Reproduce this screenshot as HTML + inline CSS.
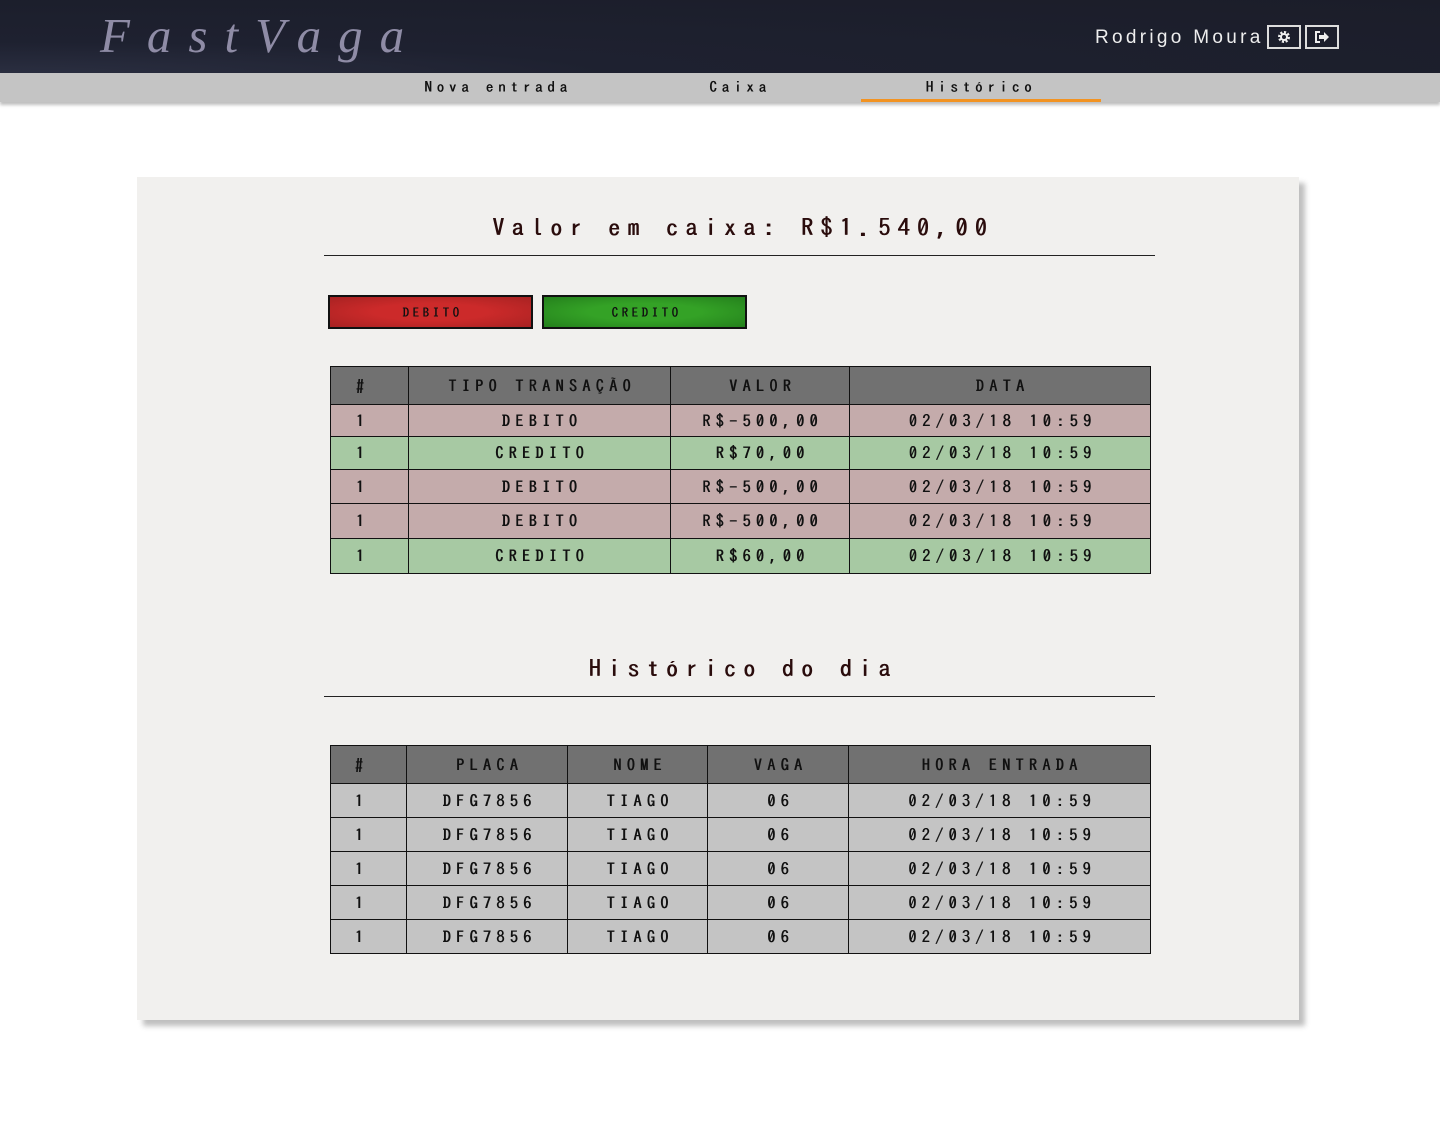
<!DOCTYPE html>
<html><head><meta charset="utf-8"><style>
*{margin:0;padding:0;box-sizing:border-box}
body{width:1440px;height:1138px;background:#fff;font-family:"IPAGothic","Liberation Mono",monospace;position:relative;overflow:hidden}
.hdr{position:absolute;left:0;top:0;width:1440px;height:73px;background:radial-gradient(ellipse at 0% 100%,#2a2e40 0%,#1e2130 30%,#1b1d29 100%);}
.logo{position:absolute;left:100px;top:7px;font-family:"Liberation Serif",serif;font-style:italic;font-size:49px;letter-spacing:17px;color:#8f8ca6}
.user{position:absolute;left:1095px;top:27px;font-family:"Liberation Sans",sans-serif;font-size:19px;letter-spacing:3.3px;color:#eee}
.ib{position:absolute;top:25px;width:34px;height:24px;border:2px solid #ddd;color:#eee;display:flex;align-items:center;justify-content:center}
.nav{position:absolute;left:0;top:73px;width:1440px;height:29px;background:#c4c4c4;box-shadow:0 3px 3px rgba(0,0,0,.25)}
.tab{position:absolute;top:0;width:240px;height:29px;text-align:center;font-size:15px;line-height:28px;letter-spacing:4.8px;color:#111;text-shadow:.5px 0 0 #111}
.tab.act{border-bottom:3px solid #f29322;line-height:28px}
.panel{position:absolute;left:137px;top:177px;width:1162px;height:843px;background:#f1f0ee;box-shadow:6px 6px 5px rgba(0,0,0,.25)}
.ttl{position:absolute;left:324px;width:831px;text-align:center;font-size:24px;letter-spacing:7.3px;padding-left:7px;color:#2a0c0c;text-shadow:.7px 0 0 #2a0c0c;border-bottom:1.5px solid #222;padding-bottom:16px}
.btn{position:absolute;top:295px;width:205px;height:34px;border:2px solid #111;font-size:13px;letter-spacing:3.5px;padding-left:4px;text-align:center;line-height:32px;color:#111;text-shadow:.4px 0 0 #111}
table{position:absolute;left:330px;border-collapse:collapse;font-size:16px;color:#111}
td,th{border:1.5px solid #111;text-align:center;letter-spacing:5.4px;padding:0 0 0 5px;font-weight:normal;text-shadow:.6px 0 0 #111}
td:first-child,th:first-child{padding:0 14px 0 0}
th{background:#717171;height:38px}
.d td{background:#c4abab}.c td{background:#a7c9a3}.g td{background:#c4c4c4}
</style></head><body>
<div class="hdr"><div class="logo">FastVaga</div><div class="user">Rodrigo Moura</div>
<div class="ib" style="left:1267px"><svg width="14" height="14" viewBox="0 0 14 14"><circle cx="7" cy="7" r="4.5" fill="none" stroke="#eee" stroke-width="3" stroke-dasharray="2 1.5"/><circle cx="7" cy="7" r="3" fill="none" stroke="#eee" stroke-width="2"/></svg></div>
<div class="ib" style="left:1305px"><svg width="16" height="14" viewBox="0 0 16 14"><path d="M6 2H2v10h4" fill="none" stroke="#eee" stroke-width="2"/><path d="M5 5h5V2l5 5-5 5V9H5z" fill="#eee"/></svg></div>
</div>
<div class="nav"><div class="tab" style="left:378px">Nova entrada</div><div class="tab" style="left:620px">Caixa</div><div class="tab act" style="left:861px">Histórico</div></div>
<div class="panel"></div>
<div class="ttl" style="top:215px">Valor em caixa: R$1.540,00</div>
<div class="btn" style="left:328px;background:radial-gradient(ellipse,#cc2a2a 40%,#a82222 100%)">DEBITO</div>
<div class="btn" style="left:542px;background:radial-gradient(ellipse,#34a226 40%,#24801c 100%)">CREDITO</div>
<table style="top:366px;width:821px">
<tr><th style="width:78px">#</th><th style="width:262px">TIPO TRANSAÇÃO</th><th style="width:179px">VALOR</th><th>DATA</th></tr>
<tr class="d" style="height:32px"><td>1</td><td>DEBITO</td><td>R$-500,00</td><td>02/03/18 10:59</td></tr>
<tr class="c" style="height:33px"><td>1</td><td>CREDITO</td><td>R$70,00</td><td>02/03/18 10:59</td></tr>
<tr class="d" style="height:34px"><td>1</td><td>DEBITO</td><td>R$-500,00</td><td>02/03/18 10:59</td></tr>
<tr class="d" style="height:35px"><td>1</td><td>DEBITO</td><td>R$-500,00</td><td>02/03/18 10:59</td></tr>
<tr class="c" style="height:35px"><td>1</td><td>CREDITO</td><td>R$60,00</td><td>02/03/18 10:59</td></tr>
</table>
<div class="ttl" style="top:656px">Histórico do dia</div>
<table style="top:745px;width:821px">
<tr><th style="width:76px">#</th><th style="width:161px">PLACA</th><th style="width:140px">NOME</th><th style="width:141px">VAGA</th><th>HORA ENTRADA</th></tr>
<tr class="g" style="height:34px"><td>1</td><td>DFG7856</td><td>TIAGO</td><td>06</td><td>02/03/18 10:59</td></tr>
<tr class="g" style="height:34px"><td>1</td><td>DFG7856</td><td>TIAGO</td><td>06</td><td>02/03/18 10:59</td></tr>
<tr class="g" style="height:34px"><td>1</td><td>DFG7856</td><td>TIAGO</td><td>06</td><td>02/03/18 10:59</td></tr>
<tr class="g" style="height:34px"><td>1</td><td>DFG7856</td><td>TIAGO</td><td>06</td><td>02/03/18 10:59</td></tr>
<tr class="g" style="height:34px"><td>1</td><td>DFG7856</td><td>TIAGO</td><td>06</td><td>02/03/18 10:59</td></tr>
</table>
</body></html>
